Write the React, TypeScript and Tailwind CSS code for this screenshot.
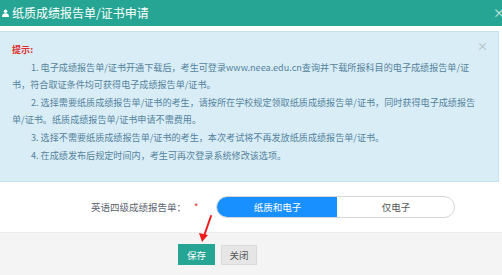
import React from 'react';

const App: React.FC = () => {
  return (
    <div className="relative w-[502px] h-[275px] overflow-hidden bg-white font-['Noto_Sans_CJK_SC',sans-serif]">
      {/* header */}
      <div className="h-[26px] bg-[#27a594] flex items-center text-white">
        <svg className="ml-[2px] w-[7px] h-[8px]" viewBox="0 0 7 8" fill="white">
          <circle cx="3.5" cy="2.2" r="1.8" />
          <path d="M0 8 C0 5 1.5 4.2 3.5 4.2 C5.5 4.2 7 5 7 8 Z" />
        </svg>
        <span className="ml-[3px] text-[12px] leading-none">纸质成绩报告单/证书申请</span>
        <span className="ml-auto mr-[-3px] text-[12px] leading-none text-white/80">×</span>
      </div>

      {/* alert */}
      <div className="relative mt-[5px] ml-[-1px] mr-[3px] bg-[#d9edf7] border border-[#c4e3ee] pt-[9px] pb-[17px] pl-[12px] text-[9.1px] leading-[17.6px] text-[#55839c] whitespace-nowrap">
        <span className="absolute right-[10px] top-[6px] text-[11px] text-[#a9b8bf]">×</span>
        <div className="text-[#e03131] font-bold">提示:</div>
        <div className="pl-[19px]">1. 电子成绩报告单/证书开通下载后，考生可登录www.neea.edu.cn查询并下载所报科目的电子成绩报告单/证</div>
        <div>书，符合取证条件均可获得电子成绩报告单/证书。</div>
        <div className="pl-[19px]">2. 选择需要纸质成绩报告单/证书的考生，请按所在学校规定领取纸质成绩报告单/证书，同时获得电子成绩报告</div>
        <div>单/证书。纸质成绩报告单/证书申请不需费用。</div>
        <div className="pl-[19px]">3. 选择不需要纸质成绩报告单/证书的考生，本次考试将不再发放纸质成绩报告单/证书。</div>
        <div className="pl-[19px]">4. 在成绩发布后规定时间内，考生可再次登录系统修改该选项。</div>
      </div>

      {/* form row */}
      <div className="h-[50px] flex items-center text-[9.5px] text-[#5a6470]">
        <div className="w-[186px] text-right">英语四级成绩报告单：</div>
        <span className="ml-[8px] text-[#e03131]">*</span>
        <div className="ml-[18px] flex w-[239px] h-[22px] rounded-full border border-[#d6d6d6] overflow-hidden">
          <div className="w-[120px] bg-[#1890ff] text-white flex items-center justify-center">纸质和电子</div>
          <div className="flex-1 flex items-center justify-center text-[#555]">仅电子</div>
        </div>
      </div>

      {/* footer */}
      <div className="h-[44px] bg-[#f4f4f4] border-t border-[#ececec] flex items-center pl-[178px] gap-[6px] text-[9.5px]">
        <button className="w-[37px] h-[21px] bg-[#27a594] text-white">保存</button>
        <button className="w-[36px] h-[20px] bg-[#e6e6e6] border border-[#d9d9d9] text-[#555]">关闭</button>
      </div>

      {/* red annotation arrow */}
      <svg className="absolute left-[195px] top-[214px] w-[22px] h-[30px]" viewBox="0 0 22 30">
        <path d="M16 2 L9 22" stroke="#ee1c1c" strokeWidth="2" strokeLinecap="round" fill="none" />
        <path d="M4 19 L7 28 L13 21 Z" fill="#ee1c1c" />
      </svg>
    </div>
  );
};

export default App;
